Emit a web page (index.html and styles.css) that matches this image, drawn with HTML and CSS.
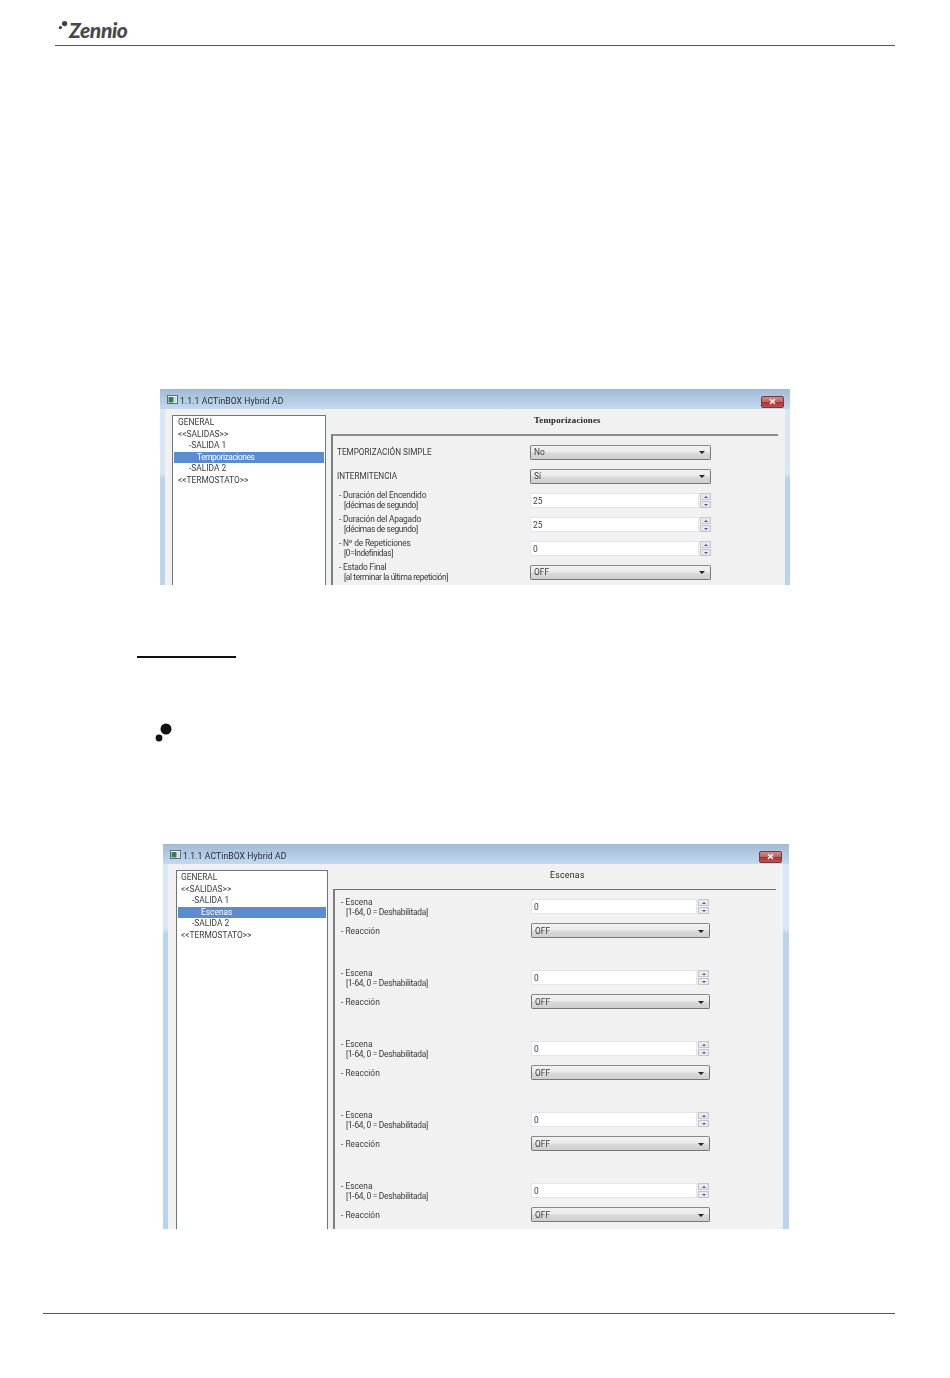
FILE: index.html
```html
<!DOCTYPE html>
<html lang="es">
<head>
<meta charset="utf-8">
<title>Zennio ACTinBOX Hybrid AD</title>
<link rel="stylesheet" href="styles.css">
</head>
<body>
<header class="page-header">
  <div class="logo">
    <svg class="logo-dots" width="12" height="12" viewBox="0 0 12 12"><circle cx="7.6" cy="3.6" r="2.7"/><circle cx="3.4" cy="7.6" r="1.7"/></svg>
    <span class="logo-text">Zennio</span>
  </div>
</header>

<section class="win win-a">
  <div class="titlebar">
    <svg class="win-icon" width="11" height="9" viewBox="0 0 11 9"><rect x=".5" y=".5" width="10" height="8" fill="#f4f6f8" stroke="#5d6b78"/><rect x="1.5" y="2" width="5" height="5.5" fill="#2f7f55"/><rect x="7" y="2" width="2.5" height="5.5" fill="#cfd8e2"/></svg>
    <span class="win-title">1.1.1 ACTinBOX Hybrid AD</span>
    <span class="close"><svg width="9" height="7" viewBox="0 0 9 7"><path d="M2 1.2 7 5.8M7 1.2 2 5.8" stroke="#f4eaea" stroke-width="1.6"/></svg></span>
  </div>
  <div class="body">
    <ul class="tree">
      <li class="lvl0">GENERAL</li>
      <li class="lvl0">&lt;&lt;SALIDAS&gt;&gt;</li>
      <li class="lvl1">-SALIDA 1</li>
      <li class="lvl2 selected">Temporizaciones</li>
      <li class="lvl1">-SALIDA 2</li>
      <li class="lvl0">&lt;&lt;TERMOSTATO&gt;&gt;</li>
    </ul>
    <div class="main">
      <h2 class="main-title bold">Temporizaciones</h2>
      <div class="panel">
        <div class="row"><div class="label wide">TEMPORIZACIÓN SIMPLE</div><div class="select"><span>No</span><i class="caret"></i></div></div>
        <div class="row"><div class="label wide">INTERMITENCIA</div><div class="select"><span>Sí</span><i class="caret"></i></div></div>
        <div class="row"><div class="label">- Duración del Encendido<br><span class="sub">[décimas de segundo]</span></div><div class="spin"><div class="input">25</div><div class="arrows"><b class="up"></b><b class="down"></b></div></div></div>
        <div class="row"><div class="label">- Duración del Apagado<br><span class="sub">[décimas de segundo]</span></div><div class="spin"><div class="input">25</div><div class="arrows"><b class="up"></b><b class="down"></b></div></div></div>
        <div class="row"><div class="label">- Nº de Repeticiones<br><span class="sub">[0=Indefinidas]</span></div><div class="spin"><div class="input">0</div><div class="arrows"><b class="up"></b><b class="down"></b></div></div></div>
        <div class="row"><div class="label">- Estado Final<br><span class="sub">[al terminar la última repetición]</span></div><div class="select"><span>OFF</span><i class="caret"></i></div></div>
      </div>
    </div>
  </div>
</section>

<div class="rule-short"></div>

<svg class="bullet" width="20" height="20" viewBox="0 0 20 20"><circle cx="12" cy="7" r="5.5"/><circle cx="5" cy="16" r="3.4"/></svg>

<section class="win win-b">
  <div class="titlebar">
    <svg class="win-icon" width="11" height="9" viewBox="0 0 11 9"><rect x=".5" y=".5" width="10" height="8" fill="#f4f6f8" stroke="#5d6b78"/><rect x="1.5" y="2" width="5" height="5.5" fill="#2f7f55"/><rect x="7" y="2" width="2.5" height="5.5" fill="#cfd8e2"/></svg>
    <span class="win-title">1.1.1 ACTinBOX Hybrid AD</span>
    <span class="close"><svg width="9" height="7" viewBox="0 0 9 7"><path d="M2 1.2 7 5.8M7 1.2 2 5.8" stroke="#f4eaea" stroke-width="1.6"/></svg></span>
  </div>
  <div class="body">
    <ul class="tree">
      <li class="lvl0">GENERAL</li>
      <li class="lvl0">&lt;&lt;SALIDAS&gt;&gt;</li>
      <li class="lvl1">-SALIDA 1</li>
      <li class="lvl2 selected">Escenas</li>
      <li class="lvl1">-SALIDA 2</li>
      <li class="lvl0">&lt;&lt;TERMOSTATO&gt;&gt;</li>
    </ul>
    <div class="main">
      <h2 class="main-title">Escenas</h2>
      <div class="panel">
        <div class="group">
          <div class="row"><div class="label">- Escena<br><span class="sub">[1-64, 0 = Deshabilitada]</span></div><div class="spin"><div class="input">0</div><div class="arrows"><b class="up"></b><b class="down"></b></div></div></div>
          <div class="row"><div class="label">- Reacción</div><div class="select"><span>OFF</span><i class="caret"></i></div></div>
        </div>
        <div class="group">
          <div class="row"><div class="label">- Escena<br><span class="sub">[1-64, 0 = Deshabilitada]</span></div><div class="spin"><div class="input">0</div><div class="arrows"><b class="up"></b><b class="down"></b></div></div></div>
          <div class="row"><div class="label">- Reacción</div><div class="select"><span>OFF</span><i class="caret"></i></div></div>
        </div>
        <div class="group">
          <div class="row"><div class="label">- Escena<br><span class="sub">[1-64, 0 = Deshabilitada]</span></div><div class="spin"><div class="input">0</div><div class="arrows"><b class="up"></b><b class="down"></b></div></div></div>
          <div class="row"><div class="label">- Reacción</div><div class="select"><span>OFF</span><i class="caret"></i></div></div>
        </div>
        <div class="group">
          <div class="row"><div class="label">- Escena<br><span class="sub">[1-64, 0 = Deshabilitada]</span></div><div class="spin"><div class="input">0</div><div class="arrows"><b class="up"></b><b class="down"></b></div></div></div>
          <div class="row"><div class="label">- Reacción</div><div class="select"><span>OFF</span><i class="caret"></i></div></div>
        </div>
        <div class="group">
          <div class="row"><div class="label">- Escena<br><span class="sub">[1-64, 0 = Deshabilitada]</span></div><div class="spin"><div class="input">0</div><div class="arrows"><b class="up"></b><b class="down"></b></div></div></div>
          <div class="row"><div class="label">- Reacción</div><div class="select"><span>OFF</span><i class="caret"></i></div></div>
        </div>
      </div>
    </div>
  </div>
</section>

<footer class="page-footer"></footer>
</body>
</html>
```
FILE: styles.css
```css
* { box-sizing: border-box; }
html, body { margin: 0; padding: 0; background: #fff; }
body { width: 950px; height: 1378px; overflow: hidden; font-family: "Liberation Sans", Arial, sans-serif; }

.page-header { height: 46px; margin: 0 55px; border-bottom: 1px solid #555; display: flex; align-items: flex-end; }
.logo { display: flex; align-items: flex-start; height: 26px; margin-bottom: 1px; }
.logo-dots { fill: #444; margin: 2px 0 0 2px; flex: none; }
.logo-text { font: italic 900 21px/24px Lato, sans-serif; letter-spacing: -.4px; color: #484848; }

.win {
  --frame-l: 5px; --frame-r: 5px; --tree-l: 7px; --tree-w: 154px; --gap: 5px; --panel-r: 7px;
  --row: 24px; --lab-w: 193px; --sel-w: 181px; --inp-w: 169px;
  --lab-track: -.2px; --sub-track: -.4px; --tree-shift: 1px; --label-drop: 0px;
  overflow: hidden; display: flex; flex-direction: column;
  background: linear-gradient(180deg, #d9e7f5 0, #d9e7f5 84px, #b9d3ec 90px, #b9d3ec 100%);
  filter: blur(.25px);
  color: #3a3a3a; font: 8.4px/9.5px Roboto, "Liberation Sans", sans-serif;
}
.win-a { width: 630px; height: 196px; margin: 343px 0 0 160px; }
.win-b { width: 626px; height: 385px; margin: 102px 0 0 163px; --tree-l: 8px; --tree-w: 152px; --frame-r: 6px; --lab-w: 192px; --sel-w: 179px; --inp-w: 166px; --lab-track: 0px; --sub-track: -.28px; --tree-shift: 0px; --label-drop: 2px; }

.titlebar { height: 20px; flex: none; display: flex; align-items: center; padding: 5px 6px 0 7px; background: linear-gradient(180deg, #a0bad6, #c3d9ef); }
.win-b .titlebar { padding-right: 7px; }
.win-icon { flex: none; margin: 0 2px 4px 0; }
.win-title { font-size: 8.6px; letter-spacing: .1px; color: #1e2a38; flex: 1; }
.close { width: 23px; height: 12px; display: flex; align-items: center; justify-content: center; background: linear-gradient(180deg, #d08a8a 0, #c46464 45%, #ac3434 55%, #c05050 100%); border: 1px solid #6e3b3b; border-radius: 2px; }

.body { flex: 1; min-height: 0; display: flex; gap: var(--gap); margin: 0 var(--frame-r) 0 var(--frame-l); padding: 6px var(--panel-r) 0 var(--tree-l); background: #f1f1f1; }

.tree { list-style: none; margin: 0; padding: 1px 1px 0 calc(1px + var(--tree-shift)); width: var(--tree-w); flex: none; background: #fff; border: 1px solid #6d7680; border-bottom: 0; }
.tree li { height: 11.6px; line-height: 11.6px; white-space: nowrap; }
.lvl0 { padding-left: 3px; }
.lvl1 { padding-left: 14px; }
.lvl2 { padding-left: 23px; }
.selected { background: #5b8bd0; color: #fff; margin-left: calc(0px - var(--tree-shift)); }
.win-a .selected { letter-spacing: -.45px; }

.main { flex: 1; min-width: 0; display: flex; flex-direction: column; }
.main-title { flex: none; margin: 0 0 0 203px; height: 19px; font-size: 8.6px; line-height: 10px; font-weight: 400; color: #222; letter-spacing: .2px; }
.win-a .main-title { font-family: "Liberation Serif", serif; font-size: 8.9px; }
.win-b .main-title { margin-left: 217px; letter-spacing: .35px; }
.main-title.bold { font-weight: 700; }

.panel { flex: none; height: 400px; border-top: 2px solid #8d8d8d; border-left: 2px solid #7f7f7f; padding: 4.5px 0 0 4px; }
.win-b .panel { border-top: 1px solid #6f6f6f; padding-top: 4.5px; }
.group { margin-bottom: 23px; }
.row { height: var(--row); display: flex; align-items: center; }
.label { width: var(--lab-w); flex: none; padding: var(--label-drop) 0 0 2px; white-space: nowrap; letter-spacing: var(--lab-track); }
.label.wide { padding-left: 0; font-size: 8.2px; letter-spacing: 0; }
.sub { padding-left: 5px; letter-spacing: var(--sub-track); }

.select { width: var(--sel-w); height: 15px; display: flex; align-items: center; justify-content: space-between; padding: var(--label-drop) 5px 0 3px; border: 1px solid #777; border-top-color: #8a8a8a; border-radius: 2px; background: linear-gradient(180deg, #f2f2f2 0, #ebebeb 45%, #d9d9d9 55%, #cfcfcf 100%); }
.caret { width: 0; height: 0; border: 3px solid transparent; border-top: 3px solid #222; border-bottom: 0; }

.spin { width: var(--sel-w); display: flex; gap: 1px; }
.input { width: var(--inp-w); height: 15px; padding: 2px 0 0 2px; background: #fff; border: 1px solid #e2e6ea; line-height: 10px; }
.arrows { width: 11px; display: flex; flex-direction: column; gap: 1px; }
.arrows b { height: 7px; display: flex; align-items: center; justify-content: center; background: #e6e9ee; border: 1px solid #c6c6c6; }
.arrows b::before { content: ""; width: 0; height: 0; border: 2px solid transparent; }
.up::before { border-top: 0 !important; border-bottom: 2px solid #4a55b0 !important; }
.down::before { border-bottom: 0 !important; border-top: 2px solid #4a55b0 !important; }

.rule-short { width: 99px; height: 2px; margin: 71px 0 0 137px; background: #111; }
.bullet { display: block; margin: 64px 0 0 154px; fill: #111; }

.page-footer { height: 1px; margin: 84px 55px 0 43px; background: #555; }
```
